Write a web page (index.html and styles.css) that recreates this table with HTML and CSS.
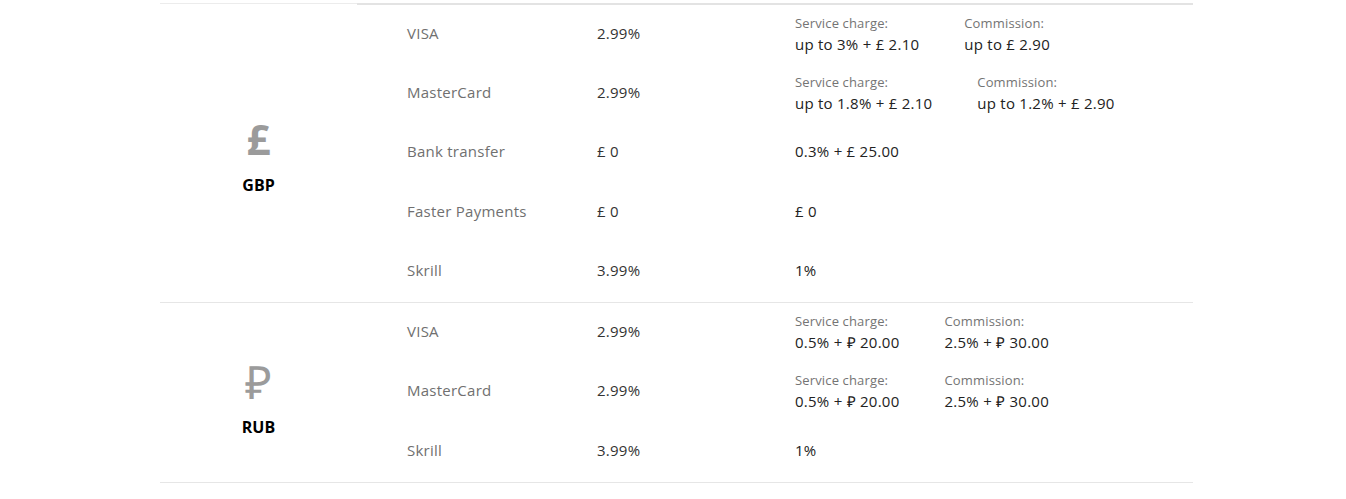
FILE: index.html
```html
<!DOCTYPE html>
<html lang="en">
<head>
<meta charset="utf-8">
<title>Fees</title>
<link rel="stylesheet" href="styles.css">
</head>
<body>
<div class="wrap">
  <section class="group first">
    <div class="cur">
      <div class="sym sym-gbp">£</div>
      <div class="code">GBP</div>
    </div>
    <div class="rows rows-gbp">
      <div class="row">
        <div class="method">VISA</div>
        <div class="val">2.99%</div>
        <div class="det">
          <div class="pair"><div class="lbl">Service charge:</div><div class="amt">up to 3% + £ 2.10</div></div>
          <div class="pair"><div class="lbl">Commission:</div><div class="amt">up to £ 2.90</div></div>
        </div>
      </div>
      <div class="row">
        <div class="method">MasterCard</div>
        <div class="val">2.99%</div>
        <div class="det">
          <div class="pair"><div class="lbl">Service charge:</div><div class="amt">up to 1.8% + £ 2.10</div></div>
          <div class="pair"><div class="lbl">Commission:</div><div class="amt">up to 1.2% + £ 2.90</div></div>
        </div>
      </div>
      <div class="row">
        <div class="method">Bank transfer</div>
        <div class="val">£ 0</div>
        <div class="det">0.3% + £ 25.00</div>
      </div>
      <div class="row">
        <div class="method">Faster Payments</div>
        <div class="val">£ 0</div>
        <div class="det">£ 0</div>
      </div>
      <div class="row">
        <div class="method">Skrill</div>
        <div class="val">3.99%</div>
        <div class="det">1%</div>
      </div>
    </div>
  </section>
  <section class="group">
    <div class="cur">
      <div class="sym sym-rub">₽</div>
      <div class="code">RUB</div>
    </div>
    <div class="rows rows-rub">
      <div class="row">
        <div class="method">VISA</div>
        <div class="val">2.99%</div>
        <div class="det">
          <div class="pair"><div class="lbl">Service charge:</div><div class="amt">0.5% + ₽ 20.00</div></div>
          <div class="pair"><div class="lbl">Commission:</div><div class="amt">2.5% + ₽ 30.00</div></div>
        </div>
      </div>
      <div class="row">
        <div class="method">MasterCard</div>
        <div class="val">2.99%</div>
        <div class="det">
          <div class="pair"><div class="lbl">Service charge:</div><div class="amt">0.5% + ₽ 20.00</div></div>
          <div class="pair"><div class="lbl">Commission:</div><div class="amt">2.5% + ₽ 30.00</div></div>
        </div>
      </div>
      <div class="row">
        <div class="method">Skrill</div>
        <div class="val">3.99%</div>
        <div class="det">1%</div>
      </div>
    </div>
  </section>
</div>
</body>
</html>
```

FILE: styles.css
```css
html, body {
  margin: 0;
  padding: 0;
  background: #fff;
}

body {
  font-family: "Open Sans", "Liberation Sans", sans-serif;
  font-size: 15px;
  letter-spacing: 0.25px;
  color: #333;
}

.wrap {
  padding: 3px 0 0 160px;
  width: 1033px;
}

.group {
  display: flex;
  border-bottom: 1px solid #e6e6e6;
}

.cur {
  width: 197px;
  flex: none;
  display: flex;
  flex-direction: column;
  align-items: center;
  justify-content: center;
  padding-top: 13px;
  box-sizing: border-box;
}

.first .cur {
  border-top: 1px solid #ececec;
}

.rows {
  flex: 1;
  display: flex;
  flex-direction: column;
}

.first .rows {
  border-top: 2px solid #e3e3e3;
}

.row {
  display: flex;
  align-items: center;
  box-sizing: border-box;
  padding-bottom: 4px;
}

.rows-gbp .row {
  height: 59.4px;
}

.rows-rub .row {
  height: 59.6px;
}

.sym {
  color: #9b9b9b;
  line-height: 48px;
  letter-spacing: 0;
}

.sym-gbp {
  font-size: 42px;
  font-weight: 700;
  margin-top: -8px;
}

.sym-rub {
  font-size: 46px;
  font-weight: 500;
  margin-top: -4px;
}

.code {
  margin-top: 12px;
  font-weight: 700;
  font-size: 16px;
  color: #000;
  line-height: 20px;
  letter-spacing: 0;
}

.method {
  width: 190px;
  padding-left: 50px;
  flex: none;
  color: #707070;
}

.val {
  width: 198px;
  flex: none;
  color: #333;
}

.det {
  flex: 1;
  color: #222;
  display: flex;
  align-items: flex-start;
}

.pair {
  margin-right: 45px;
  padding-top: 3px;
}

.lbl {
  font-size: 13px;
  letter-spacing: 0.15px;
  line-height: 19px;
  color: #747474;
}

.amt {
  line-height: 22px;
  color: #222;
}
```
